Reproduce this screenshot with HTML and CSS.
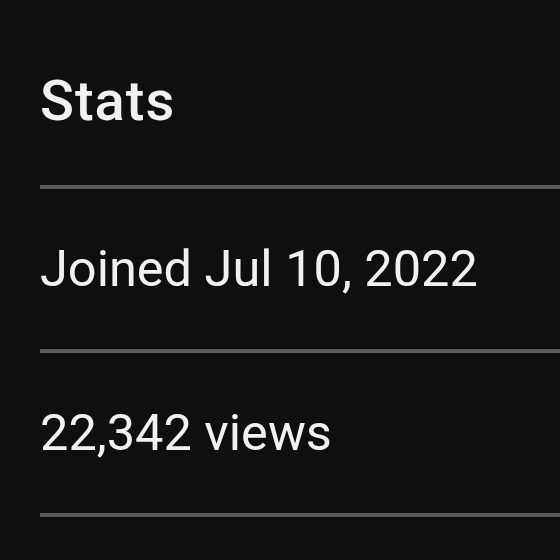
FILE: index.html
```html
<!DOCTYPE html>
<html lang="en">
<head>
    <meta charset="UTF-8">
    <title>Stats</title>
    <link rel="stylesheet" href="styles.css">
</head>
<body>
    <div class="stats">
        <h2 class="stats-title">Stats</h2>
        <div class="stats-row">Joined Jul 10, 2022</div>
        <div class="stats-row">22,342 views</div>
        <div class="stats-row"></div>
    </div>
</body>
</html>
```

FILE: styles.css
```css
body {
    margin: 0;
    background-color: #0f0f0f;
    font-family: Roboto, "Liberation Sans", Arial, sans-serif;
    color: #f1f1f1;
}
.stats {
    padding: 68px 0 0 40px;
}
.stats-title {
    margin: 0 0 51px 0;
    font-size: 56px;
    font-weight: 500;
    letter-spacing: 1px;
    line-height: 66px;
}
.stats-row {
    border-top: 4px solid #5a5a5a;
    padding: 47px 0;
    font-size: 50.5px;
    line-height: 66px;
}
```
